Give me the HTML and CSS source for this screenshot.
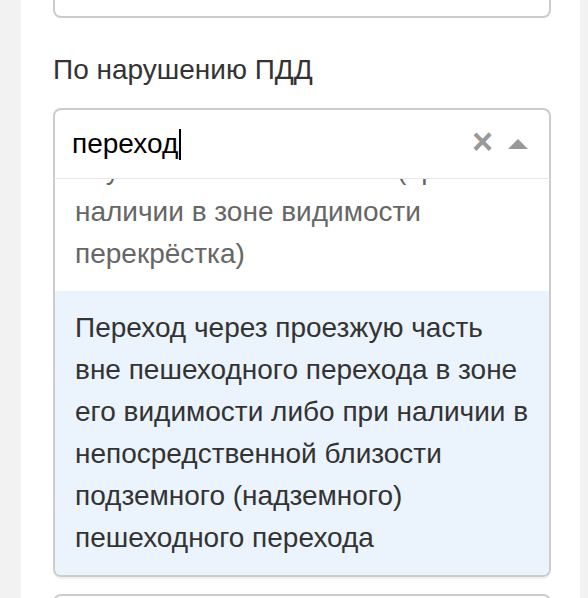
FILE: index.html
```html
<!DOCTYPE html>
<html lang="ru">
<head>
    <meta charset="UTF-8">
    <title>Нарушение</title>
    <link rel="stylesheet" href="styles.css">
</head>
<body>
    <div class="page">
        <div class="prev-input"></div>

        <div class="field">
            <label class="field-label">По нарушению ПДД</label>
            <div class="select is-open">
                <div class="select-control">
                    <div class="select-value">переход<span class="caret"></span></div>
                    <span class="select-clear">&times;</span>
                    <span class="select-arrow"></span>
                </div>
                <div class="select-menu" id="menu">
                    <div class="option">Переход проезжей части на запрещающий сигнал светофора</div>
                    <div class="option">Переход через проезжую часть вне пешеходного перехода в неустановленном месте (при наличии в зоне видимости перекрёстка)</div>
                    <div class="option is-focused">Переход через проезжую часть вне пешеходного перехода в зоне его видимости либо при наличии в непосредственной близости подземного (надземного) пешеходного перехода</div>
                </div>
            </div>
        </div>

        <div class="next-input"></div>
    </div>
    <script>
        // keep the focused option in view, like the open dropdown does
        const menu = document.getElementById('menu');
        menu.scrollTop = menu.scrollHeight;
    </script>
</body>
</html>
```

FILE: styles.css
```css
* {
    box-sizing: border-box;
}
body {
    margin: 0;
    background: #f2f2f2;
    font-family: 'Liberation Sans', Arial, sans-serif;
    color: #333;
}
.page {
    margin: 0 8px 0 21px;
    height: 598px;
    overflow: hidden;
    background: #fff;
    padding: 0 29px 0 32px;
}
.prev-input {
    height: 18px;
    border: 2px solid #ccc;
    border-top: 0;
    border-radius: 0 0 8px 8px;
}
.field-label {
    display: block;
    margin-top: 36px;
    font-size: 28px;
    line-height: 32px;
    color: #333;
}
.select {
    margin-top: 22px;
}
.select-control {
    display: flex;
    align-items: center;
    height: 70px;
    padding: 0 20px 0 17px;
    border: 2px solid #ccc;
    border-bottom: 0;
    border-radius: 8px 8px 0 0;
}
.select-value {
    flex: 1;
    font-size: 28px;
    color: #000;
    display: flex;
    align-items: center;
}
.caret {
    display: inline-block;
    width: 2px;
    height: 31px;
    margin-left: 1px;
    background: #000;
}
.select-clear {
    font-size: 36px;
    line-height: 1;
    color: #999;
    font-weight: bold;
    margin-right: 15px;
    margin-top: -4px;
}
.select-arrow {
    width: 0;
    height: 0;
    border-style: solid;
    border-width: 0 10px 10px;
    border-color: transparent transparent #999;
    margin-right: 1px;
}
.select-menu {
    height: 399px;
    overflow-y: auto;
    scrollbar-width: none;
    border: 2px solid #ccc;
    border-top: 1px solid #e6e6e6;
    border-radius: 0 0 8px 8px;
    box-shadow: 0 2px 0 rgba(0, 0, 0, 0.06);
}
.select-menu::-webkit-scrollbar {
    display: none;
}
.option {
    padding: 16px 19px 16px 20px;
    font-size: 28px;
    line-height: 42px;
    color: #666;
}
.option.is-focused {
    background: #ebf3fd;
    color: #333;
}
.next-input {
    margin-top: 17px;
    height: 50px;
    border: 2px solid #ccc;
    border-radius: 8px;
}
```
